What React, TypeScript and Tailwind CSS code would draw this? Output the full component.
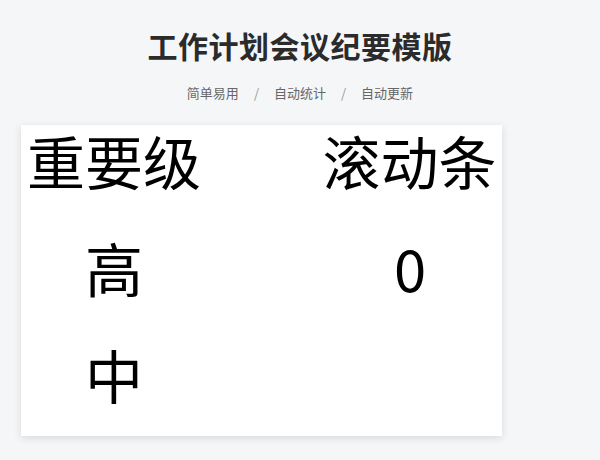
import React from "react";

const cjk = { fontFamily: '"Noto Sans CJK SC", "Noto Sans", sans-serif' };

export default function App() {
  return (
    <div className="w-[600px] h-[460px] bg-[#f5f6f8] flex flex-col items-center" style={cjk}>
      <h1 className="mt-[24px] h-[42px] flex items-center text-[30px] font-bold text-[#2b2b2b] leading-none tracking-[0.5px]">
        工作计划会议纪要模版
      </h1>
      <div className="mt-[16px] h-[20px] flex items-center gap-[15px] text-[13px] text-[#666] leading-none">
        <span>简单易用</span>
        <span className="text-[#999]">/</span>
        <span>自动统计</span>
        <span className="text-[#999]">/</span>
        <span>自动更新</span>
      </div>
      <div className="mt-[23px] self-start ml-[21px] w-[481px] bg-white shadow-[0_2px_8px_rgba(0,0,0,0.12)] pb-[27px] text-black text-[58px] leading-none font-normal">
        <div className="grid grid-cols-[186px_1fr_188px]">
          <div className="h-[70px] flex items-center justify-center">重要级</div>
          <div />
          <div className="h-[70px] flex items-center justify-center pl-[3px]">滚动条</div>
          <div className="h-[144px] flex items-center justify-center">高</div>
          <div />
          <div className="h-[144px] flex items-center justify-center pl-[4px]">0</div>
          <div className="h-[70px] flex items-center justify-center">中</div>
          <div />
          <div className="h-[70px]" />
        </div>
      </div>
    </div>
  );
}
